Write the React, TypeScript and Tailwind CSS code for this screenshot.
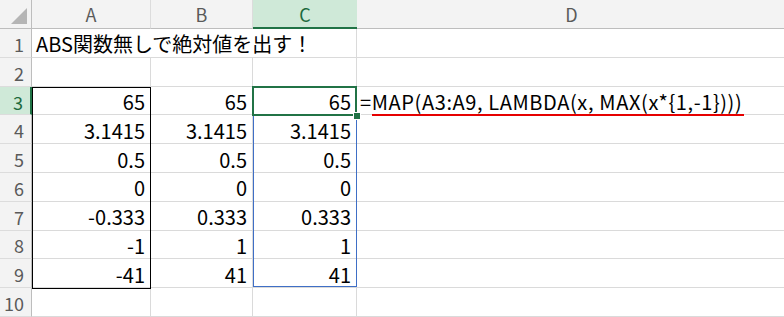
import React from 'react';

type Cell = { v: string; align?: 'left' | 'right'; formula?: boolean };

const COLS = ['A', 'B', 'C', 'D'];

const num = (v: string): Cell => ({ v, align: 'right' });

// rows 1..10, columns A..D (row 1 A spills over B and C)
const ROWS: (Cell | null)[][] = [
  [{ v: 'ABS関数無しで絶対値を出す！', align: 'left' }, null, null, null],
  [null, null, null, null],
  [num('65'), num('65'), num('65'), { v: '=MAP(A3:A9, LAMBDA(x, MAX(x*{1,-1})))', align: 'left', formula: true }],
  [num('3.1415'), num('3.1415'), num('3.1415'), null],
  [num('0.5'), num('0.5'), num('0.5'), null],
  [num('0'), num('0'), num('0'), null],
  [num('-0.333'), num('0.333'), num('0.333'), null],
  [num('-1'), num('1'), num('1'), null],
  [num('-41'), num('41'), num('41'), null],
  [null, null, null, null],
];

const App: React.FC = () => {
  return (
    <div className="relative w-[784px] h-[317px] overflow-hidden bg-white font-['Noto_Sans_CJK_JP',sans-serif] text-black">
      <div className="grid grid-cols-[32px_119px_102px_104px_430px] grid-rows-[29px_repeat(10,28.8px)]">
        {/* header row */}
        <div className="relative bg-[#f3f3f3] border-r border-b border-[#bdbdbd]">
          <div className="absolute right-[4px] bottom-[4px] w-0 h-0 border-l-[16px] border-l-transparent border-b-[16px] border-b-[#b5b5b5]" />
        </div>
        {COLS.map((c) =>
          c === 'C' ? (
            <div key={c} className="flex items-center justify-center bg-[#cfe9d8] border-b-2 border-[#217346] text-[18px] text-[#1d6a3e] pt-[1px]">
              {c}
            </div>
          ) : (
            <div key={c} className="flex items-center justify-center bg-[#f3f3f3] border-r border-r-[#dcdcdc] border-b border-b-[#bdbdbd] text-[18px] text-[#5a5a5a] pt-[1px]">
              {c}
            </div>
          )
        )}

        {ROWS.map((row, ri) => {
          const r = ri + 1;
          const sel = r === 3;
          return (
            <React.Fragment key={r}>
              <div
                className={
                  sel
                    ? 'flex items-center justify-end pr-[7px] pt-[3px] bg-[#cfe9d8] border-r-2 border-r-[#217346] border-b border-b-[#dcdcdc] text-[18px] text-[#1d6a3e]'
                    : 'flex items-center justify-end pr-[7px] pt-[3px] bg-[#f3f3f3] border-r border-r-[#bdbdbd] border-b border-b-[#dcdcdc] text-[18px] text-[#5a5a5a]'
                }
              >
                {r}
              </div>
              {r === 1 ? (
                <>
                  <div className="col-span-3 flex items-center pl-[4px] pt-[3px] border-r border-b border-[#dadada] text-[20px] whitespace-nowrap">
                    {row[0]?.v}
                  </div>
                  <div className="border-b border-[#dadada]" />
                </>
              ) : (
                row.map((cell, ci) => (
                  <div
                    key={ci}
                    className={`flex items-center pt-[3px] border-r border-b border-[#dadada] text-[20px] whitespace-nowrap ${
                      cell?.align === 'left' ? 'justify-start pl-[3px]' : 'justify-end pr-[5px]'
                    } ${cell?.formula ? 'tracking-[0.6px]' : ''}`}
                  >
                    {cell?.v}
                  </div>
                ))
              )}
            </React.Fragment>
          );
        })}
      </div>

      {/* black border around A3:A9 */}
      <div className="absolute left-[32px] top-[87px] w-[119px] h-[202px] border border-black pointer-events-none" />
      {/* blue range C3:C9 */}
      <div className="absolute left-[253px] top-[87px] w-[104px] h-[200px] border border-[#3f6fc6] pointer-events-none" />
      {/* active cell C3 */}
      <div className="absolute left-[252px] top-[86px] w-[105px] h-[30px] border-2 border-[#217346] pointer-events-none" />
      {/* fill handle */}
      <div className="absolute left-[353px] top-[112px] w-[8px] h-[8px] bg-[#217346] border border-white pointer-events-none" />
      {/* red underline */}
      <div className="absolute left-[372px] top-[114px] w-[372px] h-[2px] bg-[#e60000] pointer-events-none" />
    </div>
  );
};

export default App;
